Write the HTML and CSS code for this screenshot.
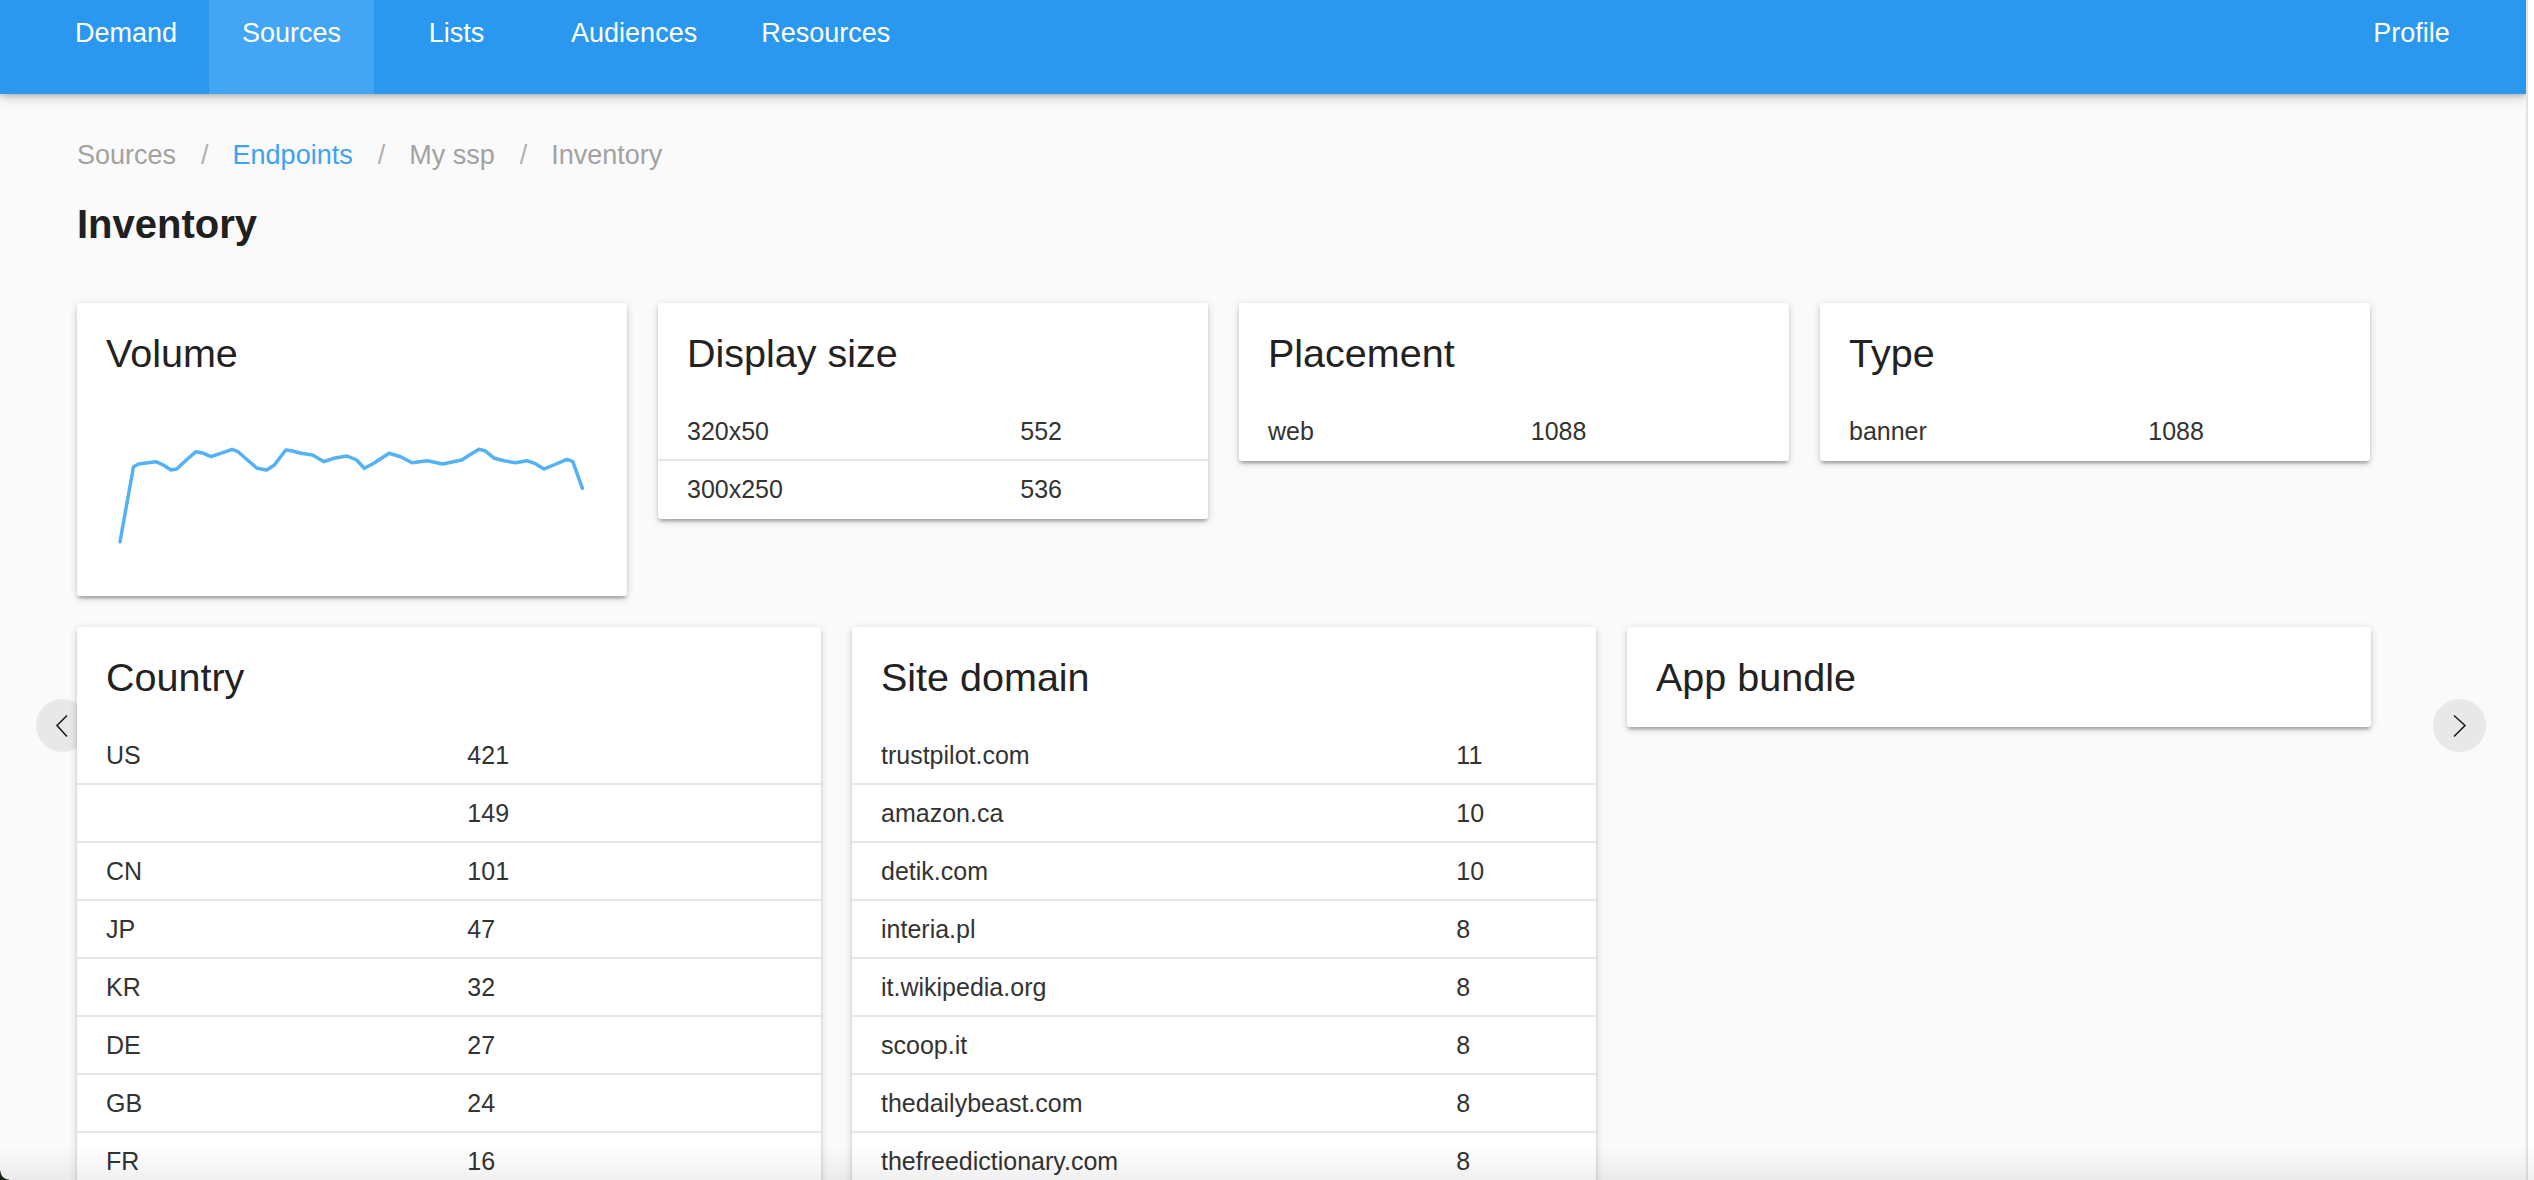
FILE: index.html
```html
<!DOCTYPE html>
<html lang="en">
<head>
<meta charset="utf-8">
<title>Inventory</title>
<link rel="stylesheet" href="styles.css">
</head>
<body>
<div class="app">
  <nav class="topnav">
    <div class="nav-group">
      <a class="nav-link">Demand</a>
      <a class="nav-link active">Sources</a>
      <a class="nav-link">Lists</a>
      <a class="nav-link">Audiences</a>
      <a class="nav-link">Resources</a>
    </div>
    <div class="nav-group">
      <a class="nav-link">Profile</a>
    </div>
  </nav>

  <main class="main">
    <div class="breadcrumb">
      <span class="crumb">Sources</span><span class="sep">/</span><span class="crumb link">Endpoints</span><span class="sep">/</span><span class="crumb">My ssp</span><span class="sep">/</span><span class="crumb">Inventory</span>
    </div>
    <h1 class="page-title">Inventory</h1>

    <div class="grid grid-4">
      <section class="card">
        <h2 class="card-title">Volume</h2>
        <svg class="chart" width="550" height="193" viewBox="0 0 550 193">
          <polyline fill="none" stroke="#52b2f3" stroke-width="3.5" stroke-linejoin="round" stroke-linecap="round"
            points="43,138.7 56.5,63.7 61.5,61 78.7,58.7 86.3,62 94,67 99.7,66 109.3,57 119,48.7 126.5,50.3 134,53.7 143.7,50.3 155,46.3 161,48.7 170.5,57 180,65.3 189.7,67 197.3,62 208.8,47 214.5,47.7 224,50.3 235.6,52 247,58.7 256.6,55.3 270,53 279.6,57 287.3,65.3 296.8,60.3 312,50.3 323.6,53.7 335,59.7 350.4,57.7 365.7,61 384.8,57 392.5,52 402,46.3 407.8,47.7 417.4,55.3 427,57.7 438.4,59.7 449.9,57.7 457.6,60.3 467,66 476.7,62 490,56.3 495.8,58.7 505.4,85.3"/>
        </svg>
      </section>

      <section class="card">
        <h2 class="card-title">Display size</h2>
        <table class="stats">
          <tr><td>320x50</td><td>552</td></tr>
          <tr><td>300x250</td><td>536</td></tr>
        </table>
      </section>

      <section class="card">
        <h2 class="card-title">Placement</h2>
        <table class="stats">
          <tr><td>web</td><td>1088</td></tr>
        </table>
      </section>

      <section class="card">
        <h2 class="card-title">Type</h2>
        <table class="stats">
          <tr><td>banner</td><td>1088</td></tr>
        </table>
      </section>
    </div>

    <div class="grid grid-3">
      <section class="card">
        <h2 class="card-title">Country</h2>
        <table class="stats">
          <tr><td>US</td><td>421</td></tr>
          <tr><td></td><td>149</td></tr>
          <tr><td>CN</td><td>101</td></tr>
          <tr><td>JP</td><td>47</td></tr>
          <tr><td>KR</td><td>32</td></tr>
          <tr><td>DE</td><td>27</td></tr>
          <tr><td>GB</td><td>24</td></tr>
          <tr><td>FR</td><td>16</td></tr>
        </table>
      </section>

      <section class="card">
        <h2 class="card-title">Site domain</h2>
        <table class="stats">
          <tr><td>trustpilot.com</td><td>11</td></tr>
          <tr><td>amazon.ca</td><td>10</td></tr>
          <tr><td>detik.com</td><td>10</td></tr>
          <tr><td>interia.pl</td><td>8</td></tr>
          <tr><td>it.wikipedia.org</td><td>8</td></tr>
          <tr><td>scoop.it</td><td>8</td></tr>
          <tr><td>thedailybeast.com</td><td>8</td></tr>
          <tr><td>thefreedictionary.com</td><td>8</td></tr>
        </table>
      </section>

      <section class="card">
        <h2 class="card-title">App bundle</h2>
      </section>
    </div>
  </main>

  <button class="arrow arrow-left" aria-label="Previous">
    <svg width="53" height="53" viewBox="0 0 53 53"><polyline points="31,16.5 21,26.5 31,37.5" fill="none" stroke="#1e1e1e" stroke-width="1.6"/></svg>
  </button>
  <button class="arrow arrow-right" aria-label="Next">
    <svg width="53" height="53" viewBox="0 0 53 53"><polyline points="21,16.5 32,26.5 21,37.5" fill="none" stroke="#1e1e1e" stroke-width="1.6"/></svg>
  </button>
</div>
<div class="bottom-fade"></div>
<div class="corner"></div>
</body>
</html>
```

FILE: styles.css
```css
html, body {
  margin: 0;
  padding: 0;
  background: #ffffff;
  overflow: hidden;
}

body {
  font-family: "Liberation Sans", Arial, sans-serif;
  height: 1180px;
}

.app {
  position: relative;
  width: 2526px;
  height: 1180px;
  overflow: hidden;
  background: #fafafa;
  border-right: 2px solid #e2e2e2;
}

/* top navigation */
.topnav {
  position: relative;
  z-index: 5;
  height: 94px;
  background: #2a98ee;
  display: flex;
  justify-content: space-between;
  padding: 0 32px 0 43px;
  box-shadow: 0 2px 5px rgba(0, 0, 0, 0.18), 0 4px 12px rgba(0, 0, 0, 0.16);
}

.nav-group {
  display: flex;
}

.nav-link {
  display: block;
  box-sizing: border-box;
  min-width: 165px;
  height: 94px;
  padding: 0 32px;
  line-height: 66px;
  text-align: center;
  color: #ffffff;
  font-size: 27px;
  cursor: pointer;
}

.nav-link.active {
  background: #42a6f5;
}

/* main */
.main {
  padding: 41px 0 0 77px;
}

.breadcrumb {
  height: 40px;
  line-height: 40px;
  font-size: 27px;
  color: #a2a2a2;
  white-space: nowrap;
}

.crumb.link {
  color: #3ea2f3;
}

.sep {
  margin: 0 24px 0 25px;
  color: #b0b0b0;
}

.page-title {
  margin: 25px 0 0;
  font-size: 40px;
  line-height: 48px;
  font-weight: 700;
  color: #202020;
}

.grid {
  display: grid;
  gap: 31px;
  align-items: start;
  width: 2294px;
}

.grid-4 {
  margin-top: 55px;
  grid-template-columns: repeat(4, 550px);
}

.grid-3 {
  margin-top: 31px;
  grid-template-columns: repeat(3, 744px);
}

.card {
  z-index: 1;
  background: #ffffff;
  border-radius: 3px;
  box-shadow: 0 3px 3px 0 rgba(0, 0, 0, 0.14), 0 5px 2px -3px rgba(0, 0, 0, 0.12), 0 2px 8px 0 rgba(0, 0, 0, 0.16);
  overflow: hidden;
}

.card-title {
  margin: 0;
  padding: 30px 29px;
  font-size: 39.5px;
  line-height: 40px;
  font-weight: 400;
  color: #222222;
}

.chart {
  display: block;
}

.stats {
  width: 100%;
  border-collapse: separate;
  border-spacing: 0;
  font-size: 25px;
  color: #333333;
}

.stats td {
  padding: 0 30px 0 29px;
  line-height: 56px;
  border-bottom: 2px solid #e6e6e6;
  white-space: nowrap;
}

.stats tr:last-child td {
  border-bottom-color: transparent;
}

/* carousel arrows */
.arrow {
  position: absolute;
  z-index: 0;
  top: 699px;
  width: 53px;
  height: 53px;
  padding: 0;
  border: none;
  border-radius: 50%;
  background: #e8e8e8;
  cursor: pointer;
}

.arrow svg {
  display: block;
}

.arrow-left {
  left: 36px;
}

.arrow-right {
  right: 40px;
}

/* window chrome overlays */
.bottom-fade {
  position: fixed;
  left: 0;
  right: 0;
  bottom: 0;
  height: 34px;
  pointer-events: none;
  z-index: 10;
  background: linear-gradient(to bottom, rgba(0, 0, 0, 0), rgba(0, 0, 0, 0.06));
}

.corner {
  position: fixed;
  left: 0;
  bottom: 0;
  width: 9px;
  height: 9px;
  z-index: 11;
  background: radial-gradient(circle at 100% 0, rgba(0, 0, 0, 0) 8px, #16241a 9px);
}
```
